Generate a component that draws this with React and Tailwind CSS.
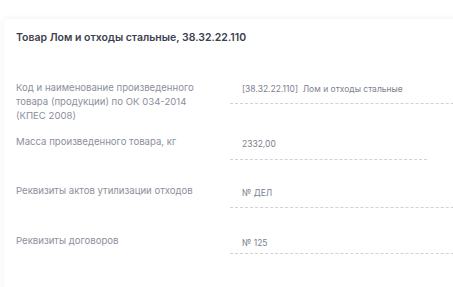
export default function App() {
  const font = { fontFamily: "Inter, 'Noto Sans', sans-serif" };
  return (
    <div className="w-[453px] h-[287px] overflow-hidden bg-white relative" style={font}>
      <div className="absolute left-[4px] top-[19px] w-[520px] h-[300px] bg-white rounded-[4px] shadow-[0_0_6px_rgba(0,0,0,0.07)] pl-[12px] pt-[12px]">
        <div className="text-[10.5px] leading-[14px] font-semibold text-[#3b3f50]">
          Товар Лом и отходы стальные, 38.32.22.110
        </div>

        {/* row 1 */}
        <div className="flex items-start mt-[36px]">
          <div className="w-[214px] pr-[30px] text-[9.6px] leading-[14px] text-[#8b8f9c]">
            Код и наименование произведенного товара (продукции) по ОК 034-2014 (КПЕС 2008)
          </div>
          <div className="flex-1 pt-[1px] pb-[7px] pl-[12px] border-b border-dashed border-[#cfd2d9] text-[8.5px] leading-[14px] text-[#7d818d]">
            [38.32.22.110]&nbsp;&nbsp;Лом и отходы стальные
          </div>
        </div>

        {/* row 2 */}
        <div className="flex items-start mt-[12px]">
          <div className="w-[214px] text-[9.6px] leading-[14px] text-[#8b8f9c]">
            Масса произведенного товара, кг
          </div>
          <div className="w-[197px] pt-[2px] pb-[8px] pl-[12px] border-b border-dashed border-[#cfd2d9] text-[8.5px] leading-[14px] text-[#7d818d]">
            2332,00
          </div>
        </div>

        {/* row 3 */}
        <div className="flex items-start mt-[24px]">
          <div className="w-[214px] text-[9.6px] leading-[14px] text-[#8b8f9c]">
            Реквизиты актов утилизации отходов
          </div>
          <div className="flex-1 pt-[2px] pb-[7px] pl-[12px] border-b border-dashed border-[#cfd2d9] text-[8.5px] leading-[14px] text-[#7d818d]">
            № ДЕЛ
          </div>
        </div>

        {/* row 4 */}
        <div className="flex items-start mt-[26px]">
          <div className="w-[214px] text-[9.6px] leading-[14px] text-[#8b8f9c]">
            Реквизиты договоров
          </div>
          <div className="flex-1 pt-[2px] pb-[3px] pl-[12px] border-b border-dashed border-[#cfd2d9] text-[8.5px] leading-[14px] text-[#7d818d]">
            № 125
          </div>
        </div>
      </div>
    </div>
  );
}
